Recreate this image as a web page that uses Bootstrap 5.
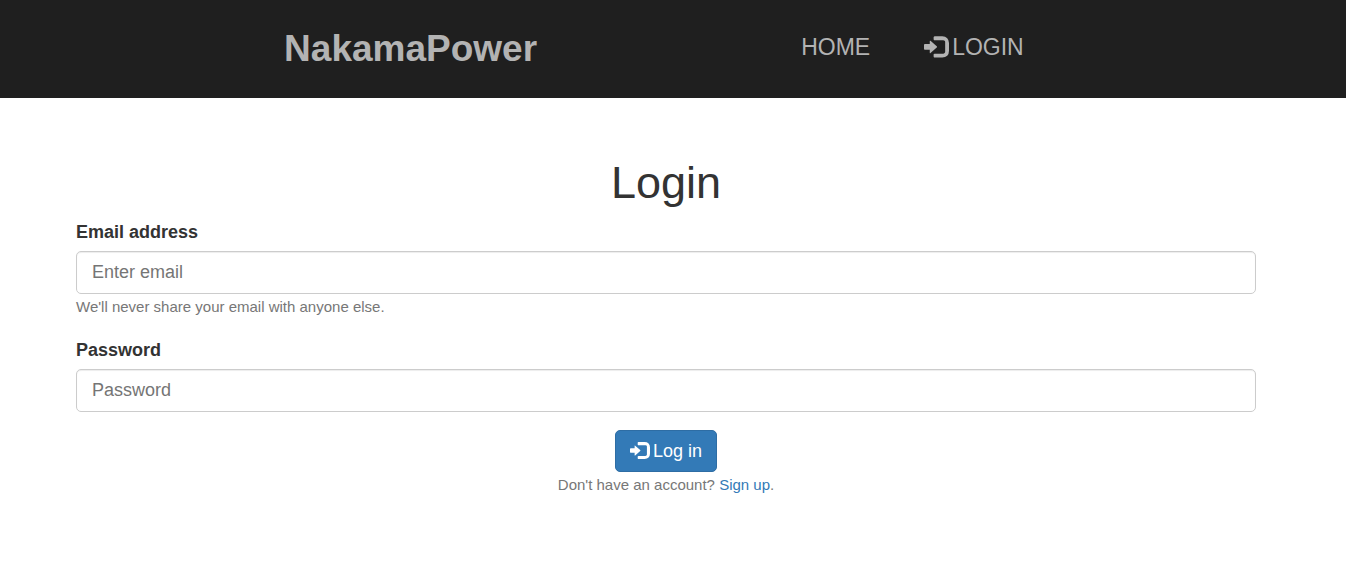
<!DOCTYPE html>
<html lang="en">
<head>
<meta charset="utf-8">
<meta name="viewport" content="width=device-width, initial-scale=1">
<title>NakamaPower</title>
<link rel="stylesheet" href="https://cdn.jsdelivr.net/npm/bootstrap@5.3.0/dist/css/bootstrap.min.css">
<style>
body{font-family:"Liberation Sans",Arial,sans-serif;font-size:18px;line-height:25px;color:#333}
.site-nav{background:#1f1f1f;font-size:23px}
.site-nav a{color:#b3b3b3;text-decoration:none}
.brand-col{padding:22px 0 22px 36px}
.site-nav .brand{font-size:37px;line-height:54px;font-weight:700}
.nav-links{gap:54px;line-height:34px}
.site-nav .glyph{width:25px;height:25px}
.glyph{width:20px;height:20px;fill:currentColor}
.icon-text{gap:3px}
.login-main{padding:60px 90px 0 76px}
h1{font-size:45px;line-height:50px;margin:0 0 11px}
.form-label{font-weight:700;line-height:26px;margin:0 0 6px}
.field{margin-bottom:18px}
.form-control{height:43px;padding:7px 15px;font-size:18px;line-height:25px;color:#555;border-color:#ccc;border-radius:5px;box-shadow:inset 0 1px 1px rgba(0,0,0,.075)}
.form-control::placeholder{color:#757575}
.hint{font-size:15px;line-height:25px;color:#777}
.btn-login{background:#337ab7;border-color:#2e6da4;color:#fff;font-size:18px;line-height:25px;height:42px;padding:0 14px;border-radius:5px}
.btn-login:hover{background:#286090;color:#fff}
.hint a{color:#337ab7;text-decoration:none}
</style>
</head>
<body>
<svg class="d-none" aria-hidden="true"><symbol id="log-in" viewBox="0 -170 1300 1300"><path transform="matrix(1 0 0 -1 0 1000)" d="M550 1100h400q165 0 257.500 -92.500t92.500 -257.500v-400q0 -165 -92.500 -257.500t-257.500 -92.500h-400q-21 0 -35.500 14.500t-14.500 35.500v100q0 21 14.500 35.500t35.500 14.500h450q41 0 70.500 29.500t29.500 70.500v500q0 41 -29.500 70.500t-70.500 29.500h-450q-21 0 -35.500 14.500t-14.500 35.500v100q0 21 14.500 35.500t35.500 14.500zM338 867l324 -284q16 -14 16 -33t-16 -33l-324 -284q-16 -14 -27 -9t-11 26v150h-250q-21 0 -35.500 14.500t-14.500 35.500v200q0 21 14.500 35.500t35.500 14.500h250v150q0 21 11 26t27 -9z"/></symbol></svg>
<header class="site-nav">
<nav class="row g-0 align-items-center">
<div class="col-7 text-center brand-col"><a class="brand d-block" href="#">NakamaPower</a></div>
<div class="col-5 nav-links d-flex ps-3 pb-1"><a href="#">HOME</a><a class="icon-text d-flex align-items-center" href="#"><svg class="glyph" aria-hidden="true"><use href="#log-in"/></svg>LOGIN</a></div>
</nav>
</header>
<main class="login-main">
<h1 class="text-center">Login</h1>
<form>
<div class="field">
<label class="form-label d-block" for="email">Email address</label>
<input class="form-control" id="email" type="email" placeholder="Enter email">
<small class="hint d-block">We'll never share your email with anyone else.</small>
</div>
<div class="field">
<label class="form-label d-block" for="password">Password</label>
<input class="form-control" id="password" type="password" placeholder="Password">
</div>
<div class="text-center"><button class="btn btn-login icon-text d-inline-flex align-items-center align-top" type="button"><svg class="glyph" aria-hidden="true"><use href="#log-in"/></svg>Log in</button>
<small class="hint d-block">Don't have an account? <a href="#">Sign up</a>.</small></div>
</form>
</main>
<script src="https://cdn.jsdelivr.net/npm/bootstrap@5.3.0/dist/js/bootstrap.bundle.min.js"></script>
</body>
</html>
